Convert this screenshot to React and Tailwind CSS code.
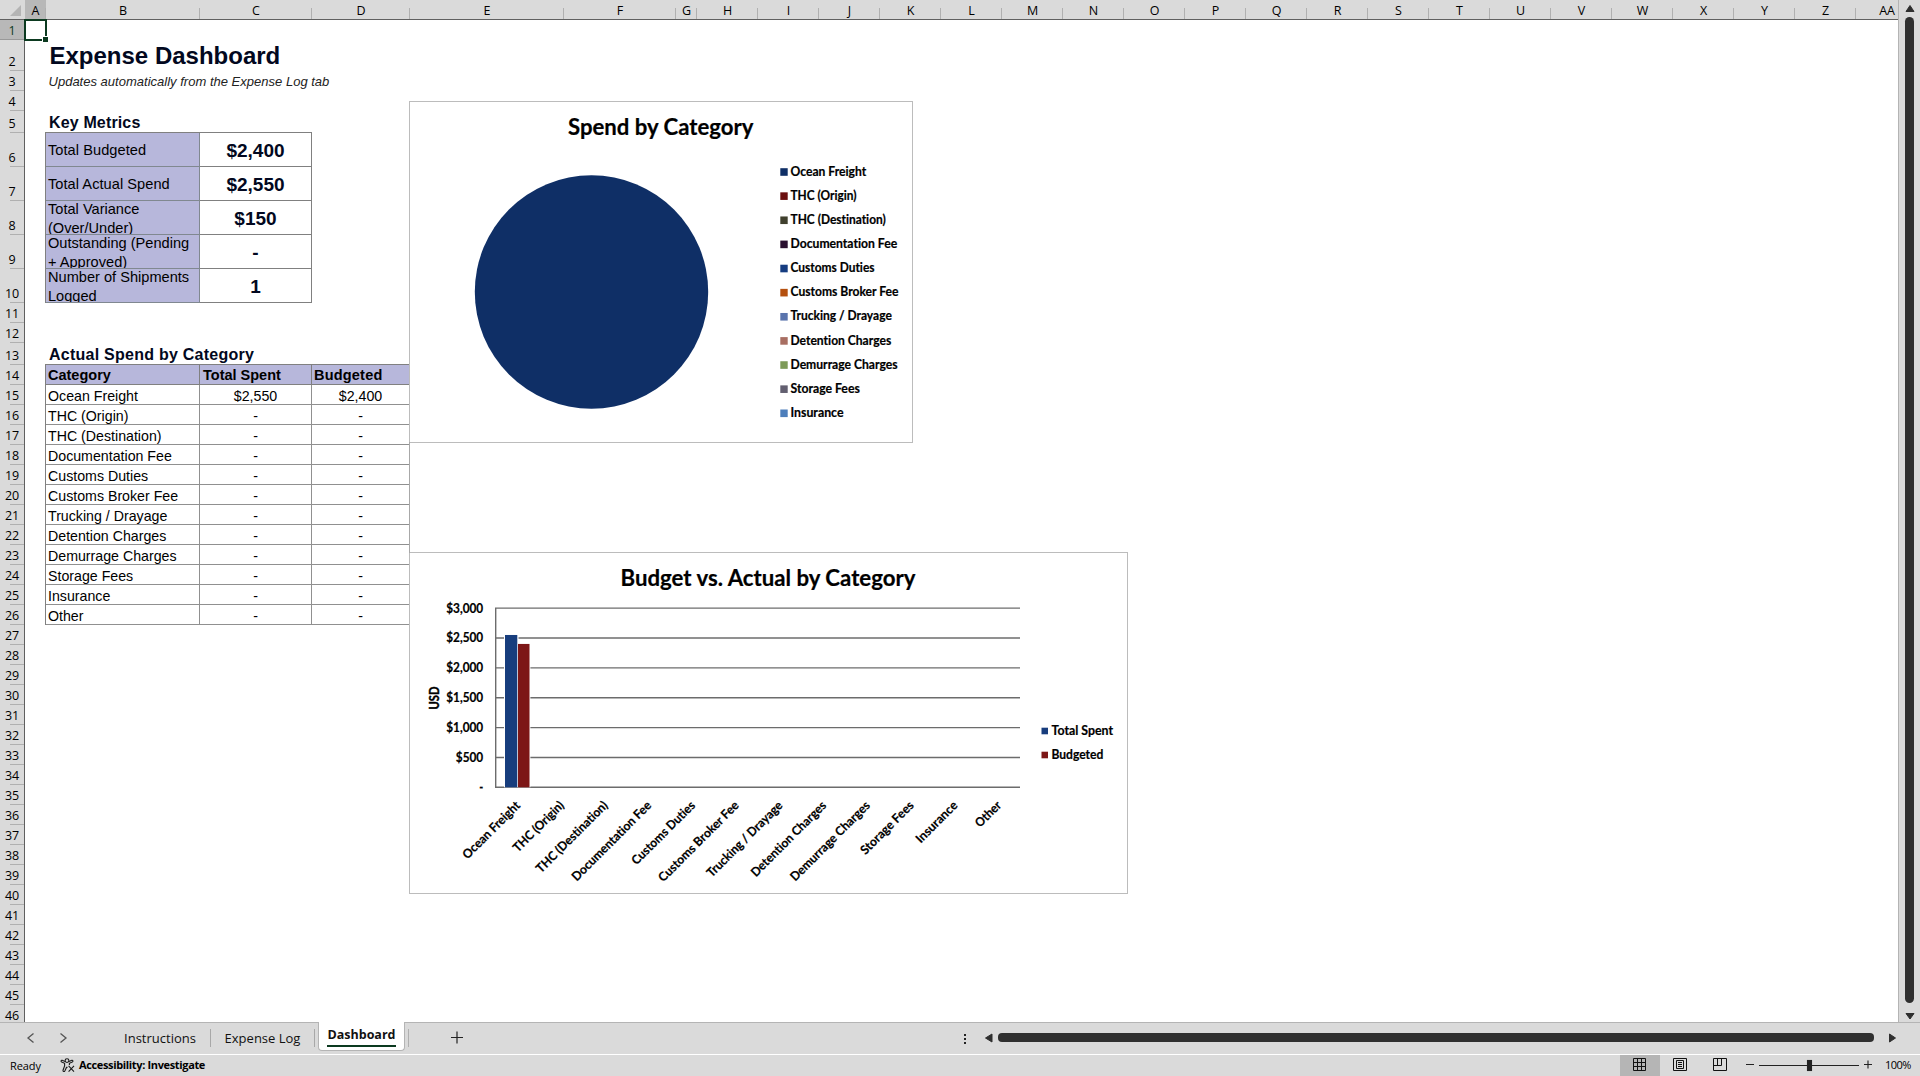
import { useState } from "react";

const COLUMNS = [
  { name: "A", w: 21 },
  { name: "B", w: 154 },
  { name: "C", w: 112 },
  { name: "D", w: 98 },
  { name: "E", w: 154 },
  { name: "F", w: 112 },
  { name: "G", w: 21 },
  ..."HIJKLMNOPQRSTUVWXYZ".split("").map((name) => ({ name, w: 61 })),
];

// row 46 is cut short by the sheet tabs
const SPECIAL_ROWS = { 2: 31, 5: 22, 6: 34, 7: 34, 8: 34, 9: 34, 10: 34, 13: 22, 46: 17 };
const ROWS = Array.from({ length: 46 }, (_, i) => ({
  n: i + 1,
  h: SPECIAL_ROWS[i + 1] || 20,
}));

const METRICS = [
  { label: "Total Budgeted", value: "$2,400" },
  { label: "Total Actual Spend", value: "$2,550" },
  { label: "Total Variance (Over/Under)", value: "$150", wrap: true },
  { label: "Outstanding (Pending + Approved)", value: "-", wrap: true },
  { label: "Number of Shipments Logged", value: "1", wrap: true },
];

const CATEGORIES = [
  { name: "Ocean Freight", color: "#0f2f66", len: 75.7, spent: 2550, budget: 2400 },
  { name: "THC (Origin)", color: "#6b0f0f", len: 66 },
  { name: "THC (Destination)", color: "#40402e", len: 95.3 },
  { name: "Documentation Fee", color: "#2a1030", len: 106.7 },
  { name: "Customs Duties", color: "#153c80", len: 84 },
  { name: "Customs Broker Fee", color: "#b5500f", len: 108 },
  { name: "Trucking / Drayage", color: "#5a74ad", len: 101.3 },
  { name: "Detention Charges", color: "#a86e62", len: 100.7 },
  { name: "Demurrage Charges", color: "#7d9a58", len: 107 },
  { name: "Storage Fees", color: "#625f70", len: 69.3 },
  { name: "Insurance", color: "#4d7ebb", len: 53 },
  { name: "Other", color: "#999999", len: 31 },
];

const TICKS = ["$3,000", "$2,500", "$2,000", "$1,500", "$1,000", "$500", "-"];

const money = (v) => (v ? "$" + v.toLocaleString("en-US") : "-");

function ColumnHeader() {
  return (
    <div className="flex h-5 shrink-0 overflow-hidden border-b border-[#606060] bg-[#dadada] text-[12.5px] font-medium text-black">
      <div className="flex w-[25px] shrink-0 items-end justify-end pr-1 pb-[3px]">
        <svg width="11" height="11">
          <path d="M11 0V11H0Z" fill="#b4b4b4" />
        </svg>
      </div>
      {COLUMNS.map((c) => (
        <div
          key={c.name}
          className={
            "flex h-[19px] shrink-0 items-end " + (c.name === "A" ? "bg-[#b8b8b8]" : "")
          }
          style={{ width: c.w }}
        >
          <span className="flex-1 pl-px text-center leading-[17px]">{c.name}</span>
          <span className="h-[11px] w-px bg-[#b0b0b0]" />
        </div>
      ))}
      <div className="w-[41px] shrink-0 pt-0.5 text-right leading-[17px]">
        <span className="pr-[2px]">AA</span>
      </div>
    </div>
  );
}

function RowHeader() {
  return (
    <div className="w-[25px] shrink-0 border-r border-[#606060] bg-[#dadada] text-[12.5px] font-medium text-black">
      {ROWS.map((r) => (
        <div
          key={r.n}
          className={
            "flex flex-col items-end justify-end " +
            (r.n === 1 ? "bg-[#b8b8b8] text-[#0c3a20]" : "")
          }
          style={{ height: r.h }}
        >
          <span
            className={
              "w-full text-center tracking-[-0.2px] " +
              (r.n === 46 ? "leading-[12px]" : "leading-[16px]")
            }
          >
            {r.n}
          </span>
          {r.n < 46 && (
            <span className={r.n === 1 ? "h-px w-full bg-[#999]" : "h-px w-[14px] bg-[#b0b0b0]"} />
          )}
        </div>
      ))}
    </div>
  );
}

function Metrics() {
  return (
    <div className="w-[267px] border-t border-l border-[#808080]">
      {METRICS.map((m) => (
        <div key={m.label} className="flex h-[34px]">
          <div
            className={
              "flex w-[154px] overflow-hidden border-r border-b border-[#808890] bg-[#b7b7db] pl-[2px] text-[14.6px] leading-[19px] text-black " +
              (m.wrap ? "items-start" : "items-center pt-[2px]")
            }
          >
            <span className={m.wrap ? "-mt-px w-[148px]" : "tracking-[0.05px]"}>{m.label}</span>
          </div>
          <div className="flex w-[112px] items-center justify-center border-r border-b border-[#808080] pt-1 text-[19px] font-bold text-[#020820]">
            {m.value}
          </div>
        </div>
      ))}
    </div>
  );
}

function CategoryTable() {
  return (
    <div className="w-[365px] border-t border-l border-[#808080] text-[14.2px] text-black">
      <div className="flex h-5 bg-[#b7b7db] text-[14.5px] leading-[21px] font-bold">
        <div className="w-[154px] border-r border-b border-[#808080] pl-[2px]">Category</div>
        <div className="w-[112px] border-r border-b border-[#808080] pl-[3px]">Total Spent</div>
        <div className="w-[98px] border-r border-b border-[#808080] pl-[2px] tracking-[0.2px]">
          Budgeted
        </div>
      </div>
      {CATEGORIES.map((c) => (
        <div key={c.name} className="flex h-5 leading-[22px]">
          <div className="w-[154px] border-r border-b border-[#909090] pl-[2px]">{c.name}</div>
          <div className="w-[112px] border-r border-b border-[#909090] text-center">
            {money(c.spent)}
          </div>
          <div className="w-[98px] border-r border-b border-[#909090] text-center">
            {money(c.budget)}
          </div>
        </div>
      ))}
    </div>
  );
}

function ChartText({ x, y, len, size = 12.4, children, ...rest }) {
  return (
    <text
      x={x}
      y={y}
      fontSize={size}
      fontWeight="bold"
      textLength={len}
      lengthAdjust="spacingAndGlyphs"
      fill="#000"
      stroke="#000"
      strokeWidth="0.2"
      {...rest}
    >
      {children}
    </text>
  );
}

function PieChart() {
  return (
    <svg
      width="504"
      height="342"
      className="block font-[Lato,sans-serif] [font-variant-ligatures:none]"
    >
      <rect x="0.5" y="0.5" width="503" height="341" fill="#fff" stroke="#bcbcbc" />
      <ChartText x={159} y={33.7} len={185.5} size={22}>
        Spend by Category
      </ChartText>
      <circle cx="182.5" cy="191" r="116.7" fill="#0f2f66" />
      {CATEGORIES.slice(0, 11).map((c, i) => (
        <g key={c.name}>
          <rect x="371.3" y={67.2 + i * 24.13} width="7.4" height="7.6" fill={c.color} />
          <ChartText x={381.5} y={74.7 + i * 24.13} len={c.len}>
            {c.name}
          </ChartText>
        </g>
      ))}
    </svg>
  );
}

function BarChart() {
  const base = 235.3;
  const scale = 179.2 / 3000;
  return (
    <svg
      width="719"
      height="342"
      className="block font-[Lato,sans-serif] [font-variant-ligatures:none]"
    >
      <rect x="0.5" y="0.5" width="718" height="341" fill="#fff" stroke="#bcbcbc" />
      <ChartText x={211.5} y={34} len={295} size={22}>
        Budget vs. Actual by Category
      </ChartText>
      {TICKS.map((t, i) => (
        <g key={t}>
          <line
            x1="86"
            x2="611"
            y1={56.1 + i * 29.87}
            y2={56.1 + i * 29.87}
            stroke="#6c6c6c"
            strokeWidth="1.4"
          />
          <ChartText
            x={74.2}
            y={60.6 + i * 29.87}
            len={t === "-" ? 4 : t === "$500" ? 27.4 : 37}
            textAnchor="end"
          >
            {t}
          </ChartText>
        </g>
      ))}
      <line x1="86.7" x2="86.7" y1="56" y2="236" stroke="#6c6c6c" strokeWidth="1.4" />
      <rect x="95" y={base - 2550 * scale} width="14.5" height={2550 * scale} fill="#fff" />
      <rect x="96" y={base - 2550 * scale} width="12.3" height={2550 * scale} fill="#173d7d" />
      <rect x="109" y={base - 2400 * scale} width="12.4" height={2400 * scale} fill="#fff" />
      <rect x="109" y={base - 2400 * scale} width="11.5" height={2400 * scale} fill="#7d1717" />
      <ChartText x={0} y={0} len={23} strokeWidth="0.4" transform="translate(30 157.5) rotate(-90)">
        USD
      </ChartText>
      {CATEGORIES.map((c, i) => (
        <ChartText
          key={c.name}
          x={0}
          y={0}
          len={c.len}
          textAnchor="end"
          transform={`translate(${112 + i * 43.73} 254.2) rotate(-45)`}
        >
          {c.name}
        </ChartText>
      ))}
      <rect x="632.5" y="175.7" width="6.5" height="6.6" fill="#173d7d" />
      <ChartText x={642.5} y={183} len={61.5}>
        Total Spent
      </ChartText>
      <rect x="632.5" y="199.7" width="6.5" height="6.6" fill="#7d1717" />
      <ChartText x={642.5} y={207} len={51.8}>
        Budgeted
      </ChartText>
    </svg>
  );
}

function Sheet() {
  return (
    <div className="relative flex-1 overflow-hidden bg-white font-['Liberation_Sans',Arial,sans-serif]">
      <div className="ml-[20px] flex flex-col">
        <h1 className="mt-5 h-[31px] pl-[4.5px] text-[24px] leading-[31px] font-bold text-[#020820]">
          Expense Dashboard
        </h1>
        <p className="h-10 pl-[3.5px] text-[13px] leading-[21px] tracking-[0.01px] text-[#222] italic">
          Updates automatically from the Expense Log tab
        </p>
        <h2 className="h-[21px] pl-[4px] text-[16px] leading-[23px] font-bold tracking-[0.15px] text-[#020820]">
          Key Metrics
        </h2>
        <Metrics />
        <h2 className="mt-10 h-[22px] pl-[4px] text-[16px] leading-[24px] font-bold tracking-[0.25px] text-[#020820]">
          Actual Spend by Category
        </h2>
        <div className="-mt-px">
          <CategoryTable />
        </div>
      </div>
      {/* charts float over the cells */}
      <div className="absolute top-[81px] left-[384px]">
        <PieChart />
      </div>
      <div className="absolute top-[532px] left-[384px]">
        <BarChart />
      </div>
      <div className="absolute top-[422px] left-[384px] h-[111px] w-px bg-[#a8a8a8]" />
    </div>
  );
}

function SheetTabs({ active, onSelect }) {
  return (
    <div className="relative flex h-8 shrink-0 items-start border-t border-[#b4b4b4] bg-[#dadada] text-[13px] text-[#111]">
      <svg width="100" height="31" fill="none" stroke="#555" strokeWidth="1.3">
        <path d="M33.5 10.5L28 15L33.5 19.5M60.500 10.500L66 15L60.500 19.500" />
      </svg>
      {["Instructions", "Expense Log", "Dashboard"].map((t) => {
        if (t === active) {
          return (
            <button
              key={t}
              onClick={() => onSelect(t)}
              className="-mt-px ml-[3px] flex h-[29px] w-[87px] justify-center rounded-b border border-t-0 border-[#b4b4b4] bg-white text-[12.5px] font-bold"
            >
              <span className="block h-[25px] w-[69px] border-b-2 border-[#0c3a20] leading-[26px] whitespace-nowrap">
                {t}
              </span>
            </button>
          );
        }
        return (
          <button
            key={t}
            onClick={() => onSelect(t)}
            className={
              "mt-1.5 h-[18px] border-r border-[#a8a8a8] leading-[19px] whitespace-nowrap " +
              (t === "Instructions" ? "w-[111px] pl-2.5" : "w-[104px]")
            }
          >
            {t}
          </button>
        );
      })}
      <span className="mt-1.5 ml-[3px] h-[18px] w-px bg-[#b0b0b0]" />
      <svg width="70" height="31" stroke="#222" strokeWidth="1.2" className="shrink-0">
        <path d="M42 14.500H54M48 8.500V20.500" />
      </svg>
      <div className="flex-1" />
      <div className="mt-[11px] flex flex-col gap-[2px]">
        <span className="size-[2px] bg-[#222]" />
        <span className="size-[2px] bg-[#222]" />
        <span className="size-[2px] bg-[#222]" />
      </div>
      <svg width="10" height="10" className="mt-2.5 ml-[18px]">
        <path d="M8 1V9L1.500 5Z" fill="#2f2f2f" stroke="#2f2f2f" strokeLinejoin="round" />
      </svg>
      <div className="mt-2.5 ml-[4px] h-[9px] w-[876px] rounded-[4px] bg-[#2f2f2f]" />
      <svg width="10" height="10" className="mt-2.5 mr-[22px] ml-[14px]">
        <path d="M1.500 1V9L7.500 5Z" fill="#2f2f2f" stroke="#2f2f2f" strokeLinejoin="round" />
      </svg>
    </div>
  );
}

function StatusBar() {
  return (
    <div className="flex h-[22px] shrink-0 items-center border-t border-white bg-[#dadada] text-[11px] text-black">
      <span className="ml-[10px] w-[50px] pt-0.5 font-medium tracking-[-0.1px]">Ready</span>
      <svg width="16" height="15" viewBox="0 0 16 15" fill="none" stroke="#1a1a1a" strokeWidth="1.1">
        <circle cx="7" cy="2.600" r="1.900" />
        <path d="M5 3.400L2.200 2.300C1 2 .6 3.600 1.700 4.100L4.600 5.300V8L3 12.200C2.700 13.500 4.200 14 4.800 12.900L6.500 9.400H7.500M9 3.400L11.800 2.300C13 2 13.400 3.600 12.300 4.100L9.400 5.300V7" />
        <path d="M8.600 7.800L14 13.600M14 7.800L8.600 13.600" />
      </svg>
      <span className="ml-[3px] font-bold tracking-[-0.35px] whitespace-nowrap">
        Accessibility: Investigate
      </span>
      <div className="flex-1" />
      <div className="flex h-[21px] w-10 items-center justify-center bg-[#b5b5b5] pr-px pb-0.5">
        <svg width="13" height="13" fill="none" stroke="#111">
          <path d="M.5.5H12.500V12.500H.5ZM.5 4.500H12.500M.5 8.500H12.500M4.500 .5V12.500M8.500 .5V12.500" />
        </svg>
      </div>
      <div className="flex w-10 items-center justify-center pb-0.5">
        <svg width="14" height="13" fill="none" stroke="#111">
          <path d="M.5.5H13.500V12.500H.5ZM3.500 2.500H10.500V10.500H3.500ZM5 4.500H9M5 6.500H9M5 8.500H9" />
        </svg>
      </div>
      <div className="flex w-10 items-center justify-center pb-0.5">
        <svg width="14" height="13" fill="none" stroke="#111">
          <path d="M.5.5H13.500V12.500H.5ZM.5 7.500H8.500V.5M4.500 .5V7.500" />
        </svg>
      </div>
      <svg width="140" height="21" stroke="#222" strokeWidth="1.1">
        <path d="M6 9.500H14M19 10.500H119M124 9.500H132M128 5.500V13.500" />
        <rect x="67.500" y="5.500" width="4" height="10" fill="#222" />
      </svg>
      <span className="mr-[8px] ml-[5px] w-[27px] font-medium tracking-[-0.5px]">100%</span>
    </div>
  );
}

export default function App() {
  const [tab, setTab] = useState("Dashboard");

  return (
    <div className="flex h-[1076px] w-[1920px] flex-col overflow-hidden bg-[#dadada] font-['Open_Sans','Noto_Sans',sans-serif]">
      <div className="flex h-[1022px] shrink-0">
        <div className="flex w-[1899px] flex-col border-r border-[#b4b4b4]">
          <ColumnHeader />
          <div className="relative flex min-h-0 flex-1">
            <RowHeader />
            <Sheet />
            {/* selected cell A1 */}
            <div className="absolute top-[-1px] left-[24px] h-[22px] w-[23px] border-2 border-[#0c3a20]">
              <span className="absolute -right-[3px] -bottom-[3px] size-[6px] border-t border-l border-white bg-[#0c3a20]" />
            </div>
          </div>
        </div>
        <div className="flex w-[21px] flex-col items-center">
          <svg width="10" height="10" className="mt-1">
            <path d="M1 7.500H9L5 1.500Z" fill="#2f2f2f" stroke="#2f2f2f" strokeLinejoin="round" />
          </svg>
          <div className="mt-[3px] h-[986px] w-[9px] rounded-full bg-[#2f2f2f]" />
          <svg width="10" height="10" className="mt-[9px]">
            <path d="M1 1.500H9L5 7Z" fill="#2f2f2f" stroke="#2f2f2f" strokeLinejoin="round" />
          </svg>
        </div>
      </div>
      <SheetTabs active={tab} onSelect={setTab} />
      <StatusBar />
    </div>
  );
}
